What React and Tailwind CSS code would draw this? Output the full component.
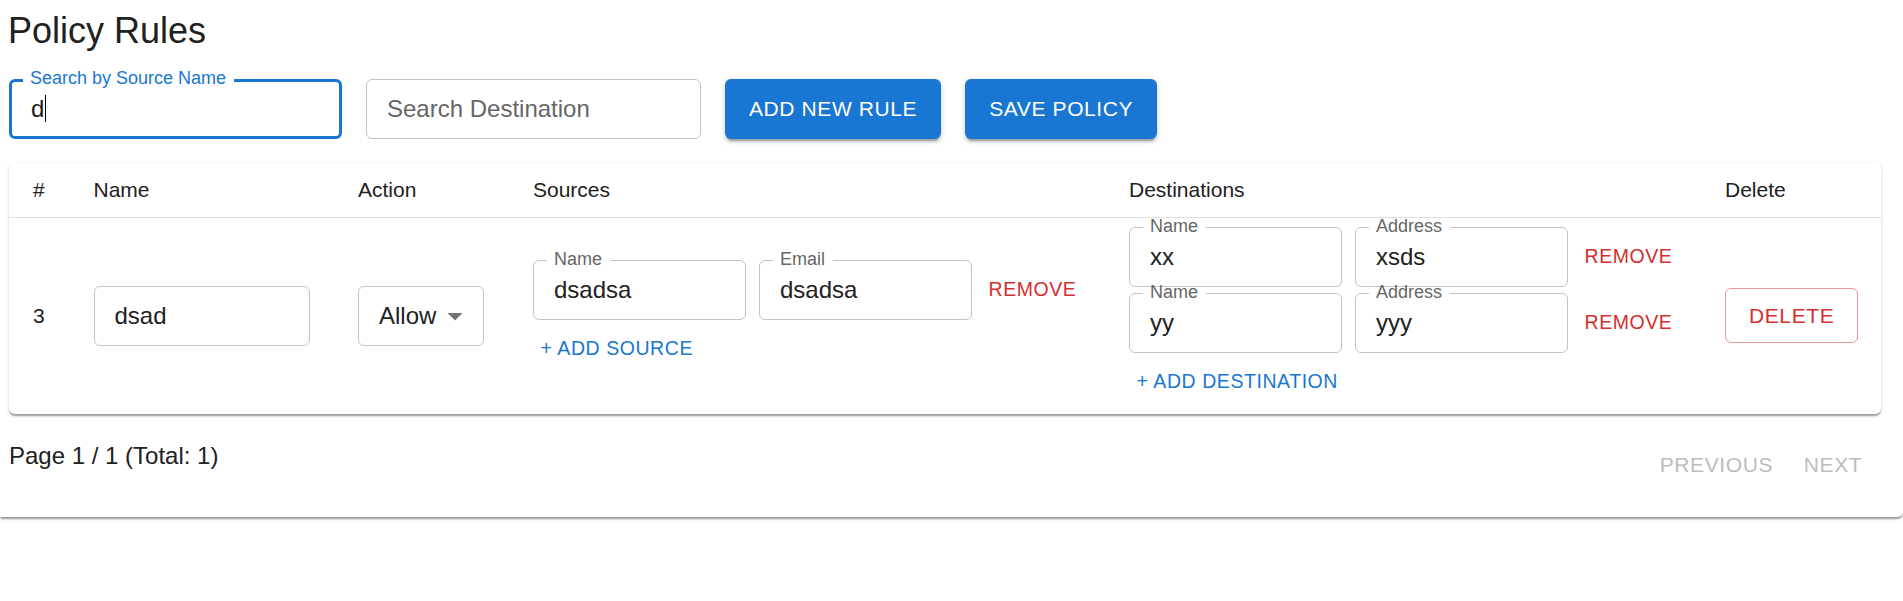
import React from 'react';

const FONT = "font-['Liberation_Sans',Arial,Helvetica,sans-serif]";

// Outlined text field, MUI-ish, drawn at the page's 1.5x scale.
function Field({ label, value, focused, cursor, placeholder, className = '' }) {
  return (
    <div
      className={`relative flex h-[60px] items-center rounded-[6px] text-[24px] text-[#212121] ${
        focused ? 'border-[3px] border-[#1976d2] px-[19px]' : 'border border-[#c4c4c4] px-[20px]'
      } ${className}`}
    >
      {label && (
        <span
          className={`absolute -translate-y-1/2 px-[7.5px] text-[18px] leading-[26px] ${
            focused ? 'left-[10.5px] top-[-4px] text-[#1976d2]' : 'left-[12.5px] top-[-2px] text-[#666666]'
          }`}
        >
          <span
            className={`absolute inset-x-0 h-[4px] -translate-y-1/2 bg-white ${
              focused ? 'top-[calc(50%+2.5px)]' : 'top-[calc(50%+1.5px)]'
            }`}
          />
          <span className="relative">{label}</span>
        </span>
      )}
      {placeholder ? (
        <span className="text-[#666666]">{placeholder}</span>
      ) : (
        <span className="flex items-center">
          {value}
          {cursor && <span className="ml-[0.5px] h-[27px] w-[1.5px] bg-black" />}
        </span>
      )}
    </div>
  );
}

function SmallTextButton({ children, color = 'red', className = '' }) {
  return (
    <button
      className={`flex h-[46px] shrink-0 items-center px-[7.5px] text-[19.5px] uppercase tracking-[0.56px] ${
        color === 'red' ? 'text-[#d32f2f]' : 'text-[#1976d2]'
      } ${className}`}
    >
      {children}
    </button>
  );
}

const SOURCES = [{ name: 'dsadsa', email: 'dsadsa' }];
const DESTS = [
  { name: 'xx', address: 'xsds' },
  { name: 'yy', address: 'yyy' },
];

export default function App() {
  return (
    <div className={`min-h-[601px] bg-white ${FONT}`}>
      <div className="rounded-br-[6px] bg-white pb-[25px] pl-[9px] pr-[22px] pt-[6.5px] shadow-[0_3px_1.5px_-1.5px_rgba(0,0,0,0.2),0_1.5px_1.5px_0_rgba(0,0,0,0.14),0_1.5px_4.5px_0_rgba(0,0,0,0.12)]">
        <h1 className="-ml-[1px] text-[36px] font-normal leading-[48px] text-[#212121]">Policy Rules</h1>

        <div className="mt-[24px] flex h-[60px] gap-[24px]">
          <Field className="w-[333px]" label="Search by Source Name" value="d" focused cursor />
          <Field className="w-[335px]" placeholder="Search Destination" />
          <button className="flex items-center rounded-[6px] bg-[#1976d2] px-[24px] text-[21px] uppercase tracking-[0.6px] text-white shadow-[0_4.5px_1.5px_-3px_rgba(0,0,0,0.2),0_3px_3px_0_rgba(0,0,0,0.14),0_1.5px_7.5px_0_rgba(0,0,0,0.12)]">
            Add New Rule
          </button>
          <button className="flex items-center rounded-[6px] bg-[#1976d2] px-[24px] text-[21px] uppercase tracking-[0.6px] text-white shadow-[0_4.5px_1.5px_-3px_rgba(0,0,0,0.2),0_3px_3px_0_rgba(0,0,0,0.14),0_1.5px_7.5px_0_rgba(0,0,0,0.12)]">
            Save Policy
          </button>
        </div>

        <div className="mt-[24px] overflow-hidden rounded-[6px] bg-white shadow-[0_3px_1.5px_-1.5px_rgba(0,0,0,0.2),0_1.5px_1.5px_0_rgba(0,0,0,0.14),0_1.5px_4.5px_0_rgba(0,0,0,0.12)]">
          <table className="w-full table-fixed border-collapse text-[21px] text-[#212121]">
            <colgroup>
              <col className="w-[60.5px]" />
              <col className="w-[264.5px]" />
              <col className="w-[175px]" />
              <col className="w-[596px]" />
              <col className="w-[596px]" />
              <col className="w-[180px]" />
            </colgroup>
            <thead>
              <tr className="border-b border-[#e0e0e0] text-left">
                <th className="px-[24px] py-[9px] font-normal leading-[36px]">#</th>
                <th className="px-[24px] py-[9px] font-normal leading-[36px]">Name</th>
                <th className="px-[24px] py-[9px] font-normal leading-[36px]">Action</th>
                <th className="px-[24px] py-[9px] font-normal leading-[36px]">Sources</th>
                <th className="px-[24px] py-[9px] font-normal leading-[36px]">Destinations</th>
                <th className="px-[24px] py-[9px] font-normal leading-[36px]">Delete</th>
              </tr>
            </thead>
            <tbody>
              <tr>
                <td className="px-[24px] py-[9px] align-middle">3</td>
                <td className="px-[24px] py-[9px] align-middle">
                  <Field className="w-full" value="dsad" />
                </td>
                <td className="px-[24px] py-[9px] align-middle">
                  <div className="relative flex h-[60px] w-[126px] items-center rounded-[6px] border border-[#c4c4c4] pl-[20px] text-[24px]">
                    Allow
                    <svg viewBox="0 0 24 24" className="absolute right-[10.5px] top-1/2 h-[36px] w-[36px] -translate-y-1/2">
                      <path d="M7 10l5 5 5-5z" fill="#757575" />
                    </svg>
                  </div>
                </td>
                <td className="px-[24px] py-[9px] align-middle">
                  <div className="flex flex-col items-start gap-[6px]">
                    {SOURCES.map((s, i) => (
                      <div key={i} className="flex items-center">
                        <Field className="w-[213px]" label="Name" value={s.name} />
                        <Field className="ml-[13px] w-[213px]" label="Email" value={s.email} />
                        <SmallTextButton className="ml-[9px]">Remove</SmallTextButton>
                      </div>
                    ))}
                    <SmallTextButton color="blue">+ Add Source</SmallTextButton>
                  </div>
                </td>
                <td className="px-[24px] py-[9px] align-middle">
                  <div className="flex flex-col items-start gap-[6px]">
                    {DESTS.map((d, i) => (
                      <div key={i} className="flex items-center">
                        <Field className="w-[213px]" label="Name" value={d.name} />
                        <Field className="ml-[13px] w-[213px]" label="Address" value={d.address} />
                        <SmallTextButton className="ml-[9px]">Remove</SmallTextButton>
                      </div>
                    ))}
                    <SmallTextButton color="blue">+ Add Destination</SmallTextButton>
                  </div>
                </td>
                <td className="px-[24px] py-[9px] align-middle">
                  <button className="flex h-[54.75px] items-center rounded-[6px] border border-[rgba(211,47,47,0.5)] px-[23px] text-[21px] uppercase tracking-[0.6px] text-[#d32f2f]">
                    Delete
                  </button>
                </td>
              </tr>
            </tbody>
          </table>
        </div>

        <div className="mt-[24px] flex items-start justify-between">
          <p className="text-[24px] leading-[36px] text-[#212121]">Page 1 / 1 (Total: 1)</p>
          <div className="flex">
            <button disabled className="h-[54.75px] min-w-[96px] px-[12px] text-[21px] uppercase tracking-[0.6px] text-[#bdbdbd]">
              Previous
            </button>
            <button disabled className="h-[54.75px] min-w-[96px] px-[12px] text-[21px] uppercase tracking-[0.6px] text-[#bdbdbd]">
              Next
            </button>
          </div>
        </div>
      </div>
    </div>
  );
}
